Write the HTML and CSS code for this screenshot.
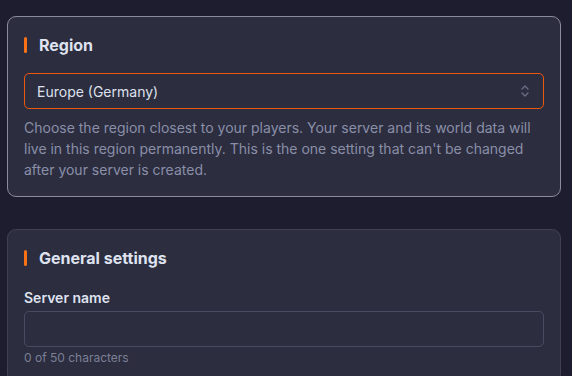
FILE: index.html
```html
<!DOCTYPE html>
<html lang="en">
<head>
    <meta charset="UTF-8">
    <meta name="viewport" content="width=device-width, initial-scale=1.0">
    <title>Create server</title>
    <link rel="stylesheet" href="styles.css">
</head>
<body>
    <div class="page">
        <section class="card card-active">
            <h2 class="card-title">Region</h2>
            <div class="select">
                <span>Europe (Germany)</span>
                <svg class="select-arrow" width="10" height="14" viewBox="0 0 10 14">
                    <path d="M2 5 L5 2 L8 5 M2 9 L5 12 L8 9" fill="none" stroke="#6b6e86" stroke-width="1.3" stroke-linecap="round" stroke-linejoin="round"/>
                </svg>
            </div>
            <p class="hint">Choose the region closest to your players. Your server and its world data will live in this region permanently. This is the one setting that can't be changed after your server is created.</p>
        </section>

        <section class="card">
            <h2 class="card-title">General settings</h2>
            <label class="field-label">Server name</label>
            <div class="input"></div>
            <p class="counter">0 of 50 characters</p>
        </section>
    </div>
</body>
</html>
```

FILE: styles.css
```css
body{
    margin: 0;
    background-color: #1d1d2f;
    font-family: Inter, "Noto Sans", sans-serif;
    color: #e1e3ef;
}

.page{
    display: flex;
    flex-direction: column;
    gap: 32px;
    padding: 16px 11px 0 7px;
}

.card{
    border: 1px solid #3f4056;
    border-radius: 9px;
    padding: 16px;
    background-color: #2c2d3f;
}

.card-active{
    border-color: #8a8ba0;
}

.card-title{
    display: flex;
    align-items: center;
    gap: 12px;
    margin: 0 0 16px;
    height: 24px;
    font-size: 16px;
    font-weight: 700;
    color: #dfe2ef;
}

.card-title::before{
    content: "";
    width: 3px;
    height: 16px;
    border-radius: 2px;
    background-color: #f97316;
}

.select{
    display: flex;
    align-items: center;
    justify-content: space-between;
    box-sizing: border-box;
    height: 36px;
    padding: 0 12px;
    border: 1px solid #ea580c;
    border-radius: 5px;
    font-size: 14px;
    color: #dde0ec;
}

.select-arrow{
    margin-right: 1px;
}

.hint{
    margin: 8px 0 0;
    font-size: 14px;
    line-height: 21px;
    color: #8a8fa8;
}

.field-label{
    display: block;
    margin-top: 18px;
    margin-bottom: 3px;
    font-size: 14px;
    font-weight: 600;
    line-height: 20px;
    color: #dfe2ef;
}

.input{
    box-sizing: border-box;
    height: 36px;
    border: 1px solid #4a4b62;
    border-radius: 5px;
}

.counter{
    margin: 3px 0 0;
    font-size: 12px;
    line-height: 16px;
    color: #7b8097;
}
```
